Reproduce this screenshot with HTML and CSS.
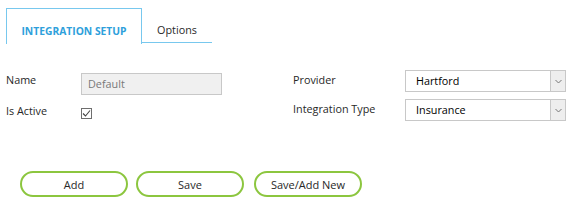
FILE: index.html
```html
<!DOCTYPE html>
<html lang="en">
<head>
    <meta charset="UTF-8">
    <title>Integration Setup</title>
    <link rel="stylesheet" href="styles.css">
</head>
<body>
    <div class="tabs">
        <div class="tab active">INTEGRATION SETUP</div>
        <div class="tab">Options</div>
    </div>

    <div class="form">
        <div class="col left">
            <div class="row">
                <span class="label">Name</span>
                <div class="text-input">Default</div>
            </div>
            <div class="row row-check">
                <span class="label">Is Active</span>
                <span class="check">
                    <svg width="9" height="9" viewBox="0 0 9 9"><path d="M1 4.5 L3.5 7 L8 1.5" fill="none" stroke="#444" stroke-width="1.1"/></svg>
                </span>
            </div>
        </div>
        <div class="col right">
            <div class="row">
                <span class="label">Provider</span>
                <div class="select">
                    <span class="select-value">Hartford</span>
                    <span class="select-arrow"><svg width="7" height="5" viewBox="0 0 7 5"><path d="M0.5 1 L3.5 4 L6.5 1" fill="none" stroke="#777" stroke-width="1"/></svg></span>
                </div>
            </div>
            <div class="row">
                <span class="label">Integration Type</span>
                <div class="select">
                    <span class="select-value">Insurance</span>
                    <span class="select-arrow"><svg width="7" height="5" viewBox="0 0 7 5"><path d="M0.5 1 L3.5 4 L6.5 1" fill="none" stroke="#777" stroke-width="1"/></svg></span>
                </div>
            </div>
        </div>
    </div>

    <div class="buttons">
        <button class="btn">Add</button>
        <button class="btn">Save</button>
        <button class="btn btn-wide">Save/Add New</button>
    </div>
</body>
</html>
```

FILE: styles.css
```css
:root{
    --tabBlue:    rgb(46, 160, 219);
    --tabBorder:  rgb(120, 200, 238);
    --fieldLine:  rgb(200, 200, 200);
    --btnGreen:   rgb(140, 198, 63);
    --textDark:   rgb(40, 40, 40);
}

body {
    margin: 0;
    background: white;
    font-family: "Open Sans", "Liberation Sans", sans-serif;
    font-size: 10.8px;
    color: var(--textDark);
}

.tabs {
    display: flex;
    margin: 8px 0 0 6px;
}

.tab {
    box-sizing: border-box;
    height: 35px;
    width: 70px;
    display: flex;
    align-items: center;
    justify-content: center;
    padding-top: 8px;
    border-bottom: 1px solid var(--tabBorder);
}

.tab.active {
    width: 136px;
    height: 36px;
    padding-top: 9px;
    border: 1px solid var(--tabBorder);
    border-bottom: none;
    color: var(--tabBlue);
    font-weight: bold;
    font-size: 10.3px;
}

.form {
    display: flex;
    padding: 26px 0 0 6px;
}

.col {
    display: flex;
    flex-direction: column;
}

.left {
    width: 287px;
    padding-top: 3px;
    gap: 8px;
}

.right {
    gap: 7px;
}

.row {
    display: flex;
    align-items: flex-start;
}

.label {
    line-height: 15px;
}

.left .label {
    width: 75px;
    margin-top: -1px;
}

.right .label {
    width: 112px;
    margin-top: 2px;
}

.text-input {
    box-sizing: border-box;
    width: 141px;
    height: 22px;
    padding: 0 6px;
    line-height: 20px;
    border: 1px solid var(--fieldLine);
    background: rgb(240, 240, 240);
    color: rgb(120, 120, 120);
}

.row-check .label {
    margin-top: 0;
}

.check {
    box-sizing: border-box;
    width: 11px;
    height: 11px;
    margin-top: 5px;
    border: 1px solid rgb(110, 110, 110);
    display: flex;
    align-items: center;
    justify-content: center;
}

.select {
    box-sizing: border-box;
    width: 161px;
    height: 22px;
    display: flex;
    border: 1px solid var(--fieldLine);
}

.select-value {
    flex: 1;
    padding-left: 10px;
    line-height: 20px;
    color: black;
}

.select-arrow {
    width: 14px;
    border-left: 1px solid var(--fieldLine);
    background: rgb(238, 238, 238);
    display: flex;
    align-items: center;
    justify-content: center;
}

.buttons {
    display: flex;
    padding: 50px 0 0 20px;
}

.btn {
    box-sizing: border-box;
    width: 108px;
    height: 26px;
    margin-right: 8px;
    border: 2px solid var(--btnGreen);
    border-radius: 13px;
    background: white;
    font-family: inherit;
    font-size: 11px;
    color: var(--textDark);
    padding: 0;
}

.btn-wide {
    margin-left: 2px;
}
```
